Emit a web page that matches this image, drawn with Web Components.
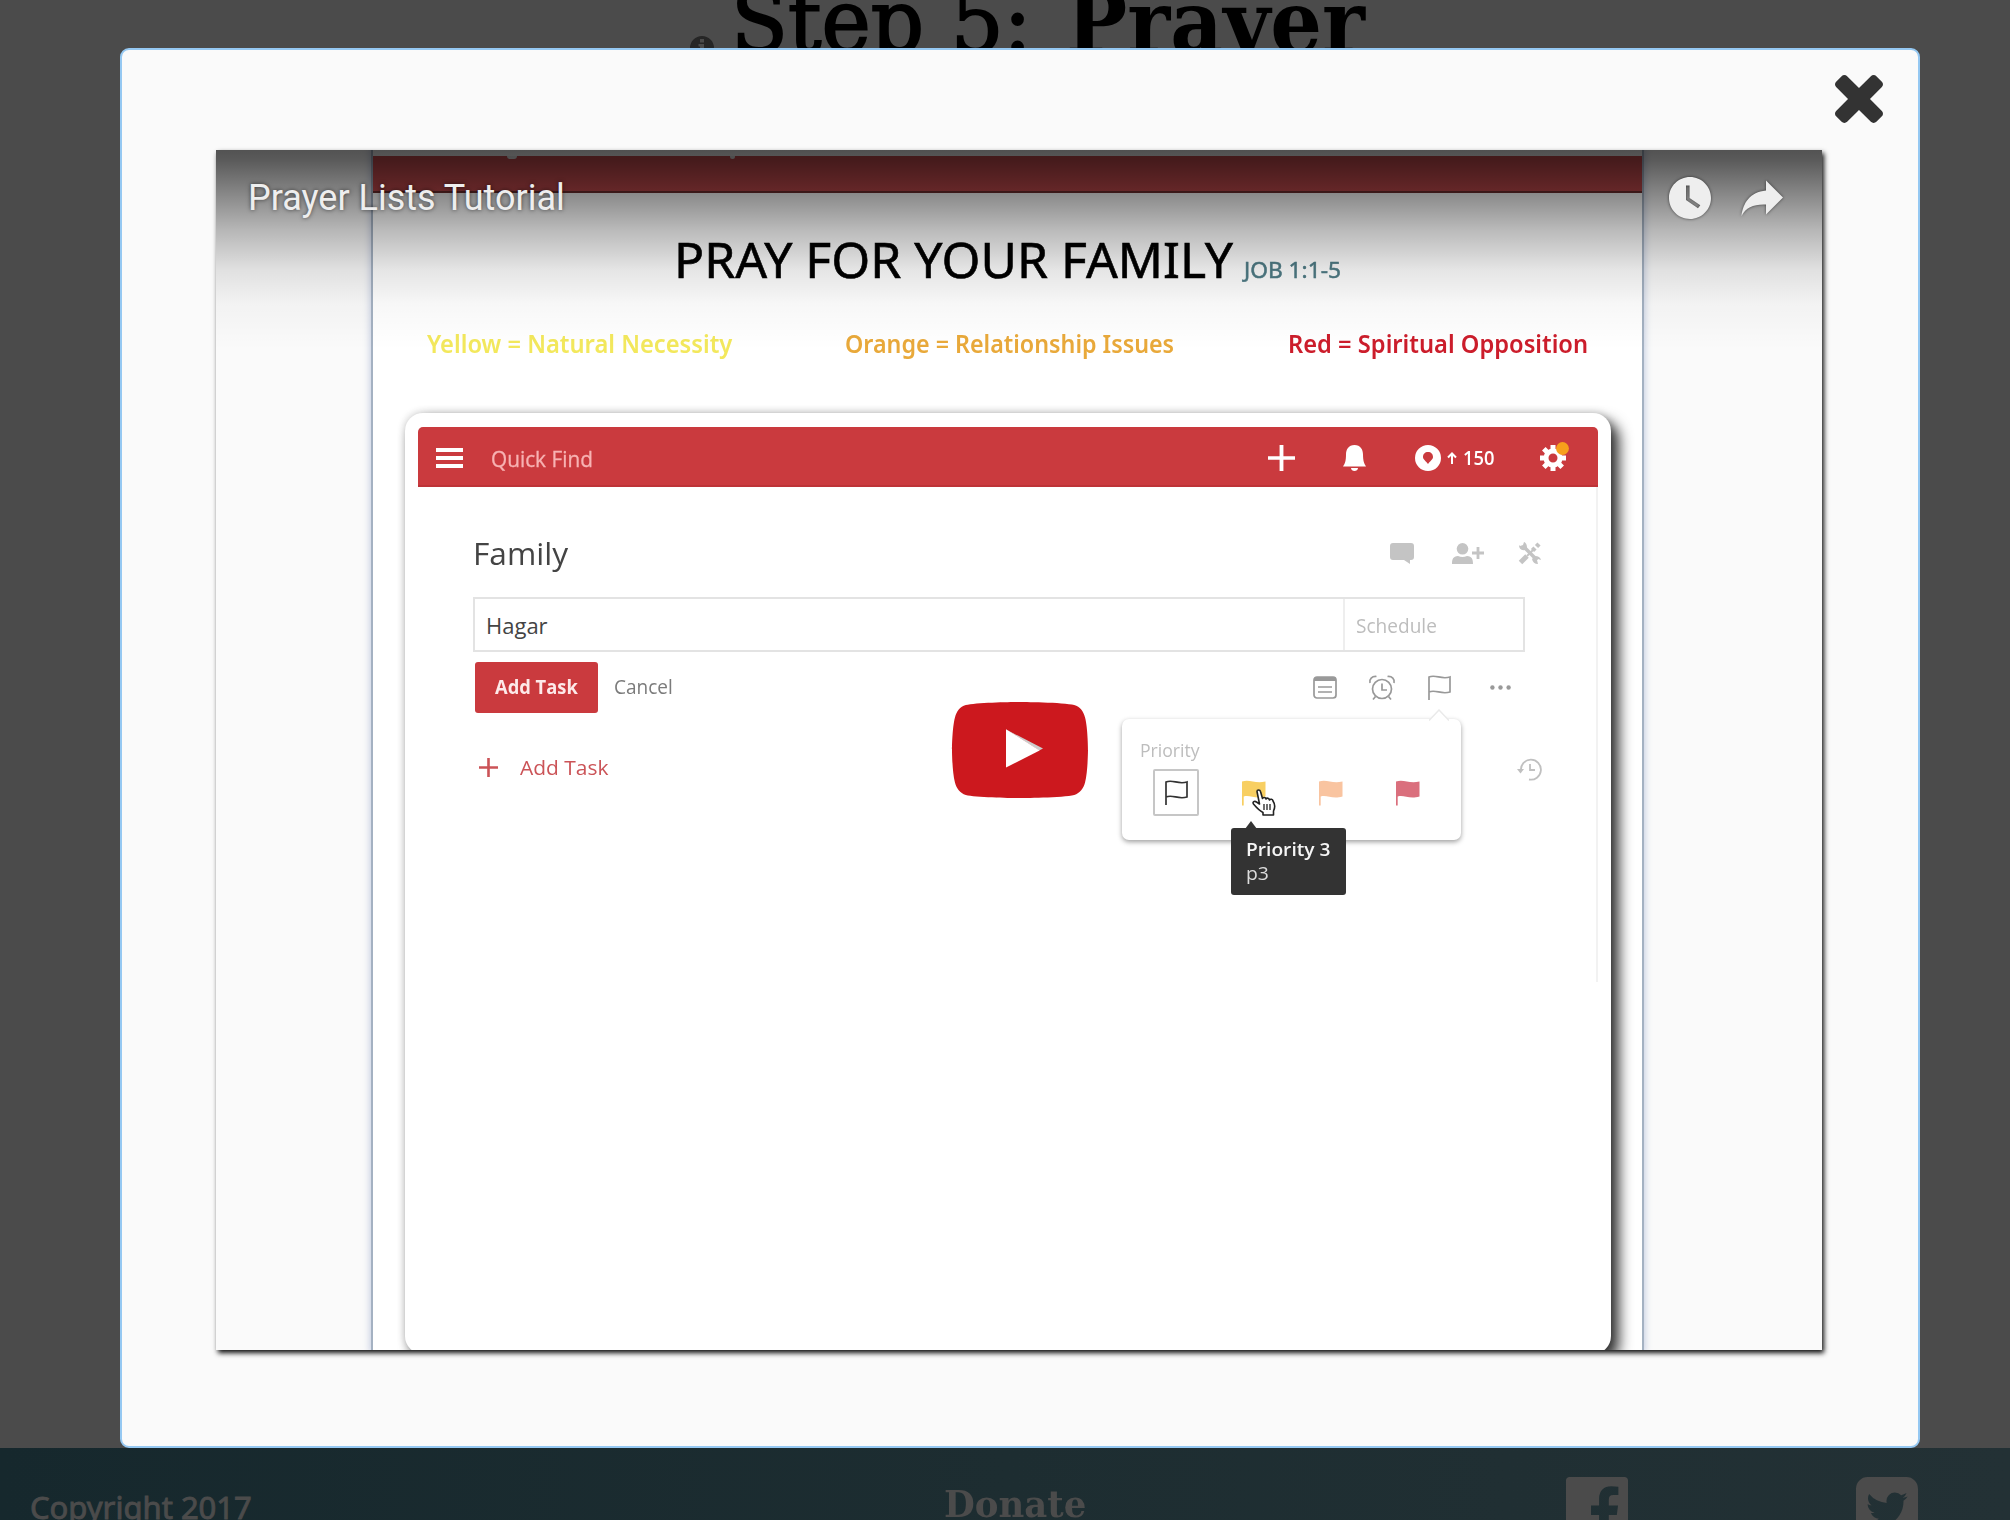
<!DOCTYPE html>
<html lang="en">
<head>
<meta charset="utf-8">
<title>Prayer Lists Tutorial</title>
<style>
html,body{margin:0;padding:0}
body{width:2010px;height:1520px;overflow:hidden;background:#4b4b4b;font-family:"Noto Sans","Open Sans",sans-serif}
</style>
</head>
<body>
<step-page>
  <modal-dialog>
    <video-player heading="Prayer Lists Tutorial"><prayer-sheet></prayer-sheet></video-player>
  </modal-dialog>
</step-page>
<script>
const define = (name, html, after) => {
  const tpl = document.createElement('template');
  tpl.innerHTML = html;
  customElements.define(name, class extends HTMLElement {
    connectedCallback() {
      if (this.shadowRoot) return;
      const root = this.attachShadow({mode: 'open'});
      root.appendChild(tpl.content.cloneNode(true));
      if (after) after(this, root);
    }
  });
};

const FLAG = 'M2 25V2C9-1 14 5 23 2V17C14 20 9 14 2 17';
const ICONS = {
  close: ['302 366 1188 1188', '<path fill="currentColor" d="M1490 1322q0 40-28 68l-136 136q-28 28-68 28t-68-28l-294-294-294 294q-28 28-68 28t-68-28l-136-136q-28-28-28-68t28-68l294-294-294-294q-28-28-28-68t28-68l136-136q28-28 68-28t68 28l294 294 294-294q28-28 68-28t68 28l136 136q28 28 28 68t-28 68l-294 294 294 294q28 28 28 68z"/>'],
  facebook: ['128 128 1536 1536', '<path fill="currentColor" d="M1579 128q35 0 60 25t25 60v1366q0 35-25 60t-60 25h-391v-595h199l30-232h-229v-148q0-56 23.5-84t91.5-28l122-1v-207q-63-9-178-9-136 0-217.5 80t-81.5 226v171h-200v232h200v595h-735q-35 0-60-25t-25-60v-1366q0-35 25-60t60-25h1366z"/>'],
  twitter: ['128 128 1536 1536', '<path fill="currentColor" d="M1408 610q-56 25-121 34 68-40 93-117-65 38-134 51-61-66-153-66-87 0-148.5 61.5t-61.5 148.5q0 29 5 48-129-7-242-65t-192-155q-29 50-29 106 0 114 91 175-47-1-100-26v2q0 75 50 133.5t123 72.5q-29 8-51 8-13 0-39-4 21 63 74.5 104t121.5 42q-116 90-261 90-26 0-50-3 148 94 322 94 112 0 210-35.5t168-95 120.5-137 75-162 24.5-168.5q0-18-1-27 63-45 105-109zm256-194v960q0 119-84.5 203.5t-203.5 84.5h-960q-119 0-203.5-84.5t-84.5-203.5v-960q0-119 84.5-203.5t203.5-84.5h960q119 0 203.5 84.5t84.5 203.5z"/>'],
  info: ['0 0 24 24', '<path fill="currentColor" fill-rule="evenodd" d="M12 0a12 12 0 1 1 0 24a12 12 0 1 1 0-24zM10 3v3.500h4V3zM8.500 8v2.500H10V18H8.500v2.500h7V18H14V8z"/>'],
  watch: ['8 8 20 20', '<path fill="currentColor" fill-rule="evenodd" d="M18 8C12.470 8 8 12.470 8 18s4.470 10 10 10 10-4.480 10-10S23.520 8 18 8M16.100 19v-7h1.700v6l5.100 3.400-1.100 1.500z"/>'],
  share: ['0 0 42 38', '<path fill="currentColor" d="M25 11.500V1.500L42 18.500L25 35.500V25.500C13 25 5 28 .5 37C2 24 9 13 25 11.500z"/>'],
  play: ['0 0 68 48', '<path fill="#cc181e" d="M66.520 7.740c-.78-2.930-2.490-5.410-5.420-6.190C55.790.130 34 0 34 0S12.210.130 6.900 1.550C3.970 2.330 2.270 4.810 1.480 7.740.060 13.050 0 24 0 24s.060 10.950 1.480 16.260c.78 2.930 2.490 5.410 5.420 6.190C12.210 47.870 34 48 34 48s21.790-.130 27.100-1.550c2.930-.780 4.640-3.260 5.420-6.190C67.940 34.950 68 24 68 24s-.060-10.950-1.480-16.260z"/><path fill="#ccc" d="M45.500 23.300L27 13.700L43.600 24.300z"/><path fill="#fff" d="M27 13.600V32.800L43.800 24.200z"/>'],
  menu: ['0 0 27 20', '<path fill="currentColor" d="M0 0h27v4H0zM0 8h27v4H0zM0 16h27v4H0z"/>'],
  plus: ['0 0 26 26', '<path stroke="currentColor" stroke-width="3.700" d="M13 0v26M0 13h26"/>'],
  thinplus: ['0 0 19 19', '<path stroke="currentColor" stroke-width="2.6" d="M9.500 0v19M0 9.500h19"/>'],
  bell: ['0 0 23 26', '<path fill="currentColor" d="M11.500 0C5.500 0 3 4.500 3 9.500c0 6-1 9-3 12h23c-2-3-3-6-3-12C20 4.500 17.500 0 11.500 0zM8 23h7c0 4-7 4-7 0z"/>'],
  karma: ['0 0 26 26', '<path fill="currentColor" fill-rule="evenodd" d="M13 0a13 13 0 1 1 0 26a13 13 0 1 1 0-26zM13 7c-3 0-5 2-5 5 0 2.500 3 4 5 7 2-3 5-4.500 5-7 0-3-2-5-5-5z"/>'],
  up: ['0 0 10 12', '<path fill="none" stroke="currentColor" stroke-width="2" d="M5 12V1.500M1 5.500L5 1.500L9 5.500"/>'],
  gear: ['0 0 28 30', '<g stroke="currentColor" fill="none" transform="translate(13 17)"><circle r="7" stroke-width="5"/><path stroke-width="5" d="M0-13v5M0 13v-5M-13 0h5M13 0h-5M-9.200-9.200l3.500 3.500M9.200 9.200l-3.500-3.500M-9.200 9.200l3.500-3.500M9.200-9.200l-3.500 3.500"/></g><circle cx="22.500" cy="7.500" r="6.400" fill="#f7a01c"/>'],
  comment: ['0 0 24 21', '<path fill="currentColor" d="M3 0h18q3 0 3 3v11q0 3-3 3h-1v4l-6-4H3q-3 0-3-3V3q0-3 3-3z"/>'],
  adduser: ['0 0 32 21', '<circle cx="10.500" cy="5.800" r="5.800" fill="currentColor"/><path fill="currentColor" d="M0 21c0-5 1-7.500 6-8q4.500 2 9 0c5 .5 6 3 6 8z"/><path stroke="currentColor" stroke-width="2.800" d="M26 4v12M20 10h12"/>'],
  tools: ['0 0 22 22', '<path fill="none" stroke="currentColor" stroke-width="3.500" d="M5 5l13 13"/><path fill="currentColor" d="M5 0l-1 3-3 1-1-1q0 6 6 5l2-2q0-5-3-6zM22 18l-3-1-1 1 1 4q-5 0-6-5l3-3q5 0 6 4z"/><path stroke="currentColor" stroke-width="5" d="M1.500 20.500L8 14"/><path stroke="currentColor" stroke-width="2" d="M8 14l6-6"/><path stroke="currentColor" stroke-width="4.500" d="M13.500 8.500L16 6M17.500 4.500L20 2"/>'],
  note: ['0 0 24 23', '<rect x="1" y="1" width="22" height="21" rx="3" fill="none" stroke="currentColor" stroke-width="1.700"/><path fill="currentColor" d="M1 4q0-3 3-3h16q3 0 3 3v1H1z"/><path stroke="currentColor" stroke-width="1.600" d="M5 11h14M5 16h14"/>'],
  alarm: ['0 0 26 25', '<g fill="none" stroke="currentColor" stroke-width="1.700"><circle cx="13" cy="14" r="9.500"/><path d="M13 8.500V15h5M1 8C0 4 3 1 7.500 1.500M25 8C26 4 23 1 18.500 1.500M6.500 21.500L4 24.500M19.500 21.500L22 24.500"/></g>'],
  flag: ['0 0 25 26', `<path fill="none" stroke="currentColor" stroke-width="1.700" d="${FLAG}"/>`],
  solidflag: ['0 0 25 26', '<path fill="currentColor" d="M1 1.500C9-1 14 4 24.500 1.500V16.500C14 19.500 9 14.500 2.700 16.500V25.500H1z"/>'],
  dots: ['0 0 21 5', '<g fill="currentColor"><circle cx="2.400" cy="2.500" r="2.200"/><circle cx="10.500" cy="2.500" r="2.200"/><circle cx="18.600" cy="2.500" r="2.200"/></g>'],
  history: ['0 0 25 23', '<path fill="none" stroke="currentColor" stroke-width="1.800" d="M4 13A10 10 0 1 1 12 21.500M13 6v6h5"/><path fill="currentColor" d="M0 11h7L3.500 15.500z"/>'],
  hand: ['0 0 24 27', '<path fill="#fff" stroke="#222" stroke-width="1.600" stroke-linejoin="round" d="M5 2.500C5 .5 8 .5 8.500 2.500L10.500 9.500C11 8 13.500 8 14 10C15 8.600 17 9 17.500 11C18.500 9.700 20.600 10.200 21 12C23 15 23.500 18 21.500 22V26H11V23.500C8 22 4 18 1.500 15C0 13 2.500 11.500 4.500 13L7.500 15z"/><path stroke="#222" stroke-width="1.300" d="M12 15v6M15 15v6M18 15v6"/>']
};

/* Icon: sized by its w and h attributes, coloured by currentColor. */
define('ui-icon', '<style>:host{display:block;flex:none}svg{display:block;width:100%;height:100%;overflow:visible}</style>', (el, root) => {
  const [box, body] = ICONS[el.getAttribute('name')];
  el.style.width = el.getAttribute('w') + 'px';
  el.style.height = el.getAttribute('h') + 'px';
  root.innerHTML += `<svg viewBox="${box}" preserveAspectRatio="none">${body}</svg>`;
});

/* One line of text condensed or widened to the width in its w attribute. */
define('fit-text', '<style>:host{display:block;flex:none;white-space:nowrap}span{display:inline-block;transform-origin:0 50%}</style><span><slot></slot></span>', (el, root) => {
  const span = root.querySelector('span'), w = +el.getAttribute('w');
  el.style.width = w + 'px';
  span.style.transform = `scaleX(${w / span.offsetWidth})`;
});

define('step-page', `<style>
:host{display:flex;flex-direction:column;justify-content:space-between;position:relative;width:2010px;height:1520px;overflow:hidden}
</style><step-heading></step-heading><slot></slot><site-footer></site-footer>`);

define('step-heading', `<style>
:host{display:flex;align-items:flex-start;height:100px;padding-left:690px;color:#000;font-family:"DejaVu Serif",serif;font-size:88px;line-height:100px}
ui-icon{margin:36px 17px 0 0;color:#262626}
fit-text{margin-top:-28px;-webkit-text-stroke:2px #000}
.b{font-weight:700;margin-left:34px;-webkit-text-stroke:0}
</style><ui-icon name="info" w="24" h="24"></ui-icon><fit-text w="301">Step 5:</fit-text><fit-text class="b" w="299">Prayer</fit-text>`);

define('site-footer', `<style>
:host{display:flex;align-items:flex-start;height:72px;overflow:hidden;color:#4b4b4b;background:linear-gradient(90deg,#16282d,#1d2d31 50%,#233135)}
.c{margin:25px 0 0 30px;font-size:31px;line-height:68px;height:68px;-webkit-text-stroke:.9px}
.d{margin:22px 0 0 692px;font:700 38px/68px "DejaVu Serif",serif}
ui-icon{margin-top:29px}.f{margin-left:480px}.t{margin-left:228px}
</style><fit-text class="c" w="222">Copyright 2017</fit-text><fit-text class="d" w="142">Donate</fit-text><ui-icon class="f" name="facebook" w="62" h="62"></ui-icon><ui-icon class="t" name="twitter" w="62" h="62"></ui-icon>`);

define('modal-dialog', `<style>
:host{position:absolute;left:120px;top:48px;width:1800px;height:1400px;box-sizing:border-box;border:2px solid #95c8f2;border-radius:9px;background:#fafafa;display:flex;flex-direction:column}
.bar{height:100px;display:flex;justify-content:flex-end;align-items:flex-start;padding:25px 35px 0 0;box-sizing:border-box;color:#333}
.body{padding-left:94px}
</style><div class="bar"><ui-icon name="close" w="48" h="48"></ui-icon></div><div class="body"><slot></slot></div>`);

define('video-player', `<style>
:host{display:block;position:relative;width:1606px;height:1200px;background:#fafafa;box-shadow:2px 3px 5px rgba(0,0,0,.95)}
.frame{height:100%;overflow:hidden}
.top{position:absolute;inset:0 0 auto;height:200px;background:linear-gradient(rgba(0,0,0,.67),rgba(0,0,0,.64) 5%,rgba(0,0,0,.46) 22%,rgba(0,0,0,.27) 40%,rgba(0,0,0,.1) 60%,rgba(0,0,0,.03) 77%,transparent)}
.title{position:absolute;inset:21px 39px auto 32px;display:flex;align-items:center;height:54px;color:#eee;font:36px/54px Roboto,sans-serif;text-shadow:0 0 4px rgba(0,0,0,.6)}
ui-icon{filter:drop-shadow(0 0 1.5px rgba(0,0,0,.6))}
.w{margin-left:auto}.s{margin-left:30px}
.play{position:absolute;left:calc(50% + 1px);top:50%;transform:translate(-50%,-50%);filter:none}
</style><div class="frame"><slot></slot></div><div class="top"></div>
<div class="title"><fit-text w="316"></fit-text><ui-icon class="w" name="watch" w="42" h="42"></ui-icon><ui-icon class="s" name="share" w="42" h="38"></ui-icon></div>
<ui-icon class="play" name="play" w="136" h="96"></ui-icon>`, (el, root) => {
  const t = document.createElement('fit-text');
  t.setAttribute('w', '317');
  t.textContent = el.getAttribute('heading');
  root.querySelector('fit-text').replaceWith(t);
});

define('prayer-sheet', `<style>
:host{display:block;width:1269px;height:1200px;margin-left:157px;padding-top:6px;box-sizing:border-box;background:#fff;box-shadow:0 0 0 2px #a4b1c2,0 0 7px 3px #c3cbe0}
:host{clip-path:inset(0 -14px)}
.band{display:flex;height:37px;box-sizing:border-box;background:#c0494c;border-bottom:2px solid #6e2e2e;box-shadow:0 -6px #f3f3f3}
.band i{width:10px;height:3px;margin-left:134px;border-radius:0 0 5px 5px;background:#ddd}.band i+i{width:5px;margin-left:213px}
.h{display:flex;align-items:baseline;margin-top:26px;height:80px;padding-left:300.500px;font-size:50px;line-height:80px;color:#000;-webkit-text-stroke:.6px}
.h .j{font-size:22px;line-height:30px;margin-left:11px;color:#4f7c86;-webkit-text-stroke:.5px}
.l{display:flex;gap:113px;margin-top:24px;padding-left:54px;font-size:25.500px;line-height:40px;height:40px;font-weight:600}
task-card{margin:50px 0 0 31.500px}
</style><div class="band"><i></i><i></i></div>
<div class="h"><fit-text w="559">PRAY FOR YOUR FAMILY</fit-text><fit-text class="j" w="97">JOB 1:1-5</fit-text></div>
<div class="l"><fit-text w="305" style="color:#f3e85c">Yellow = Natural Necessity</fit-text><fit-text w="329.5" style="color:#e9a93a">Orange = Relationship Issues</fit-text><fit-text w="300" style="color:#cc1d2b">Red = Spiritual Opposition</fit-text></div>
<task-card></task-card>`);

define('task-card', `<style>
:host{display:block;position:relative;width:1206px;height:941px;box-sizing:border-box;padding:13.500px 13px;border-radius:18px;background:#fff;box-shadow:8px 8px 14px rgba(0,0,0,.8),0 0 9px rgba(0,0,0,.2);font-family:"Open Sans","Noto Sans",sans-serif;color:#444}
.bar{display:flex;align-items:center;height:60.500px;box-sizing:border-box;padding:4px 29.500px 0 18px;border-radius:5px 5px 0 0;border-bottom:2px solid #bd3337;background:#ca3a3e;color:#fff;font-size:22px;line-height:30px}
.q{margin-left:28.500px;color:#f7b3b3;-webkit-text-stroke:.3px}
.p{margin-left:auto}.b{margin-left:48px}.k{margin-left:49px}.u{margin:0 6px}.n{font-size:19.500px;font-weight:600}.g{margin:-4px 0 0 46px}
.body{height:495px;border-right:2px solid #f2f2f2;margin-right:0;box-sizing:border-box}
.head{display:flex;align-items:center;height:70px;padding:31px 54.500px 0 55px;font-size:31px;line-height:44px}
.head ui-icon{color:#c4c4c4;margin-left:38px}.head fit-text+ui-icon{margin-left:auto}.head ui-icon:last-child{margin-left:35px}
.in{display:flex;margin:9px 0 0 55.500px;width:1052px;height:55px;box-sizing:border-box;border:2px solid #e3e3e3;font-size:22px;line-height:52px}
.in .a{flex:1;padding-left:11px}.in .s{width:180px;box-sizing:border-box;border-left:2px solid #eee;padding-left:11px;color:#bdbdbd;font-size:20px;line-height:54px}
.act{display:flex;align-items:center;height:51px;margin-top:10px;padding:0 84.500px 0 57px;font-size:20px;line-height:50px;color:#7b7b7b}
.btn{width:123px;height:51px;box-sizing:border-box;padding-left:20px;border-radius:3px;background:#ca3a3e;color:#fde9e9;font-size:19px;font-weight:700;line-height:50px;margin-right:16.500px}
.act fit-text{margin-top:-1px}
.btn fit-text{margin:0}
.act ui-icon{color:#999;margin-left:32px}.act fit-text+ui-icon{margin-left:auto}.act ui-icon:last-child{margin-left:38px}
.add{display:flex;align-items:center;height:40px;margin-top:34px;padding:0 53.500px 0 61.500px;color:#cb5357;font-size:20px;line-height:40px}
.add fit-text{margin-left:21.500px;margin-top:2px}.add ui-icon:last-child{margin-left:auto;margin-top:4px;color:#c0c0c0}
priority-menu{position:absolute;left:717px;top:306px}
</style>
<div class="bar"><ui-icon name="menu" w="27" h="20"></ui-icon><fit-text class="q" w="102">Quick Find</fit-text><ui-icon class="p" name="plus" w="27" h="26"></ui-icon><ui-icon class="b" name="bell" w="23" h="26"></ui-icon><ui-icon class="k" name="karma" w="26" h="26"></ui-icon><ui-icon class="u" name="up" w="10" h="12"></ui-icon><fit-text class="n" w="31">150</fit-text><ui-icon class="g" name="gear" w="28" h="30"></ui-icon></div>
<div class="body">
<div class="head"><fit-text w="95">Family</fit-text><ui-icon name="comment" w="24" h="21"></ui-icon><ui-icon name="adduser" w="32" h="21"></ui-icon><ui-icon name="tools" w="22" h="22"></ui-icon></div>
<div class="in"><div class="a"><fit-text w="62">Hagar</fit-text></div><div class="s"><fit-text w="81">Schedule</fit-text></div></div>
<div class="act"><div class="btn"><fit-text w="83">Add Task</fit-text></div><fit-text w="59">Cancel</fit-text><ui-icon name="note" w="24" h="23"></ui-icon><ui-icon name="alarm" w="26" h="25"></ui-icon><ui-icon name="flag" w="25" h="26"></ui-icon><ui-icon name="dots" w="21" h="5"></ui-icon></div>
<div class="add"><ui-icon name="thinplus" w="19" h="19"></ui-icon><fit-text w="88">Add Task</fit-text><ui-icon name="history" w="25" h="23"></ui-icon></div>
</div>
<priority-menu></priority-menu>`);

define('priority-menu', `<style>
:host{display:block;width:339.500px;height:121px;box-sizing:border-box;border-radius:7px;background:#fff;box-shadow:0 2px 5px rgba(0,0,0,.38);padding:18px 0 0 18px;font-size:18.500px;line-height:26px;color:#bdbdbd}
.tip{position:absolute;left:307px;top:-10px;width:20px;height:12px}
.row{display:flex;align-items:center;gap:52px;margin-top:6px;padding-left:13.500px}
.sel{width:46px;height:47px;box-sizing:border-box;border:2.500px solid #c6c6c6;border-radius:2px;display:flex;align-items:center;justify-content:center;color:#333;margin-right:-10px}
.hand{position:absolute;left:130px;top:70px}
.note{position:absolute;left:109.500px;top:108.500px;width:115px;height:67px;box-sizing:border-box;border-radius:3px;background:#333;color:#f5f5f5;padding:9px 0 0 15px;font-size:18.500px;line-height:24px}
.note b{font-weight:600}.note .p{color:#ddd}
.nip{position:absolute;left:14px;top:-7px;width:12px;height:8px}
</style>
<svg class="tip" viewBox="0 0 20 12"><path d="M0 11.500L10 1L20 11.500" fill="#fff" stroke="#eaeaea" stroke-width="1.500"/></svg>
<fit-text w="60">Priority</fit-text>
<div class="row"><div class="sel"><ui-icon name="flag" w="25" h="26"></ui-icon></div><ui-icon name="solidflag" w="25" h="26" style="color:#f8cf62"></ui-icon><ui-icon name="solidflag" w="25" h="26" style="color:#f9c4a0"></ui-icon><ui-icon name="solidflag" w="25" h="26" style="color:#da6f7d"></ui-icon></div>
<ui-icon class="hand" name="hand" w="24" h="27"></ui-icon>
<div class="note"><svg class="nip" viewBox="0 0 12 8"><path d="M0 8L6 0L12 8z" fill="#333"/></svg><fit-text w="85"><b>Priority 3</b></fit-text><fit-text class="p" w="23">p3</fit-text></div>`);
</script>
</body>
</html>
